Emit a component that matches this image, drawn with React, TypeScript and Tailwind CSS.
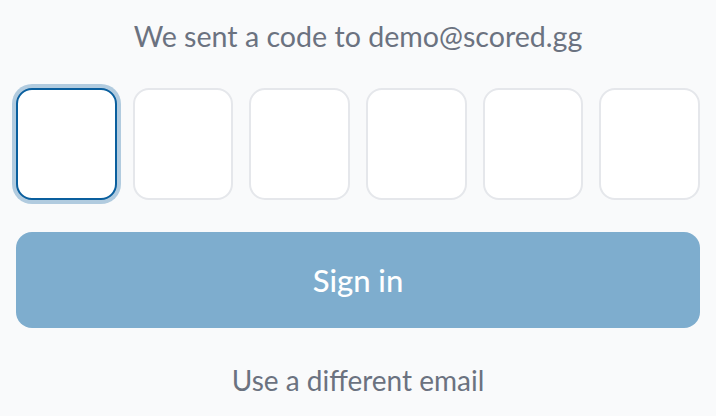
import React from "react"

const CODE_LENGTH = 6

export default function App() {
  return (
    <div
      className="min-h-screen bg-[#f9fafb] px-4 pt-4 pb-4 flex flex-col gap-8"
      style={{ fontFamily: "Lato, 'Open Sans', sans-serif" }}
    >
      <p className="text-center text-[28.6px] leading-[40px] text-[#6b7280]">
        We sent a code to demo@scored.gg
      </p>

      {/* Code inputs */}
      <div className="flex gap-4">
        {Array.from({ length: CODE_LENGTH }).map((_, i) => (
          <input
            key={i}
            type="text"
            inputMode="numeric"
            maxLength={1}
            aria-label={`Digit ${i + 1}`}
            className={
              i === 0
                ? "flex-1 min-w-0 h-[112px] rounded-2xl bg-white border-2 border-[#0a5f9e] ring-4 ring-[#0a5f9e]/30 outline-none text-center text-3xl"
                : "flex-1 min-w-0 h-[112px] rounded-2xl bg-white border-2 border-[#e5e7eb] outline-none text-center text-3xl"
            }
          />
        ))}
      </div>

      <button
        type="button"
        className="h-24 w-full rounded-2xl bg-[#7eadce] text-white text-[31px] font-medium"
      >
        Sign in
      </button>

      <button type="button" className="text-center text-[28px] leading-[40px] text-[#6b7280]">
        Use a different email
      </button>
    </div>
  )
}
